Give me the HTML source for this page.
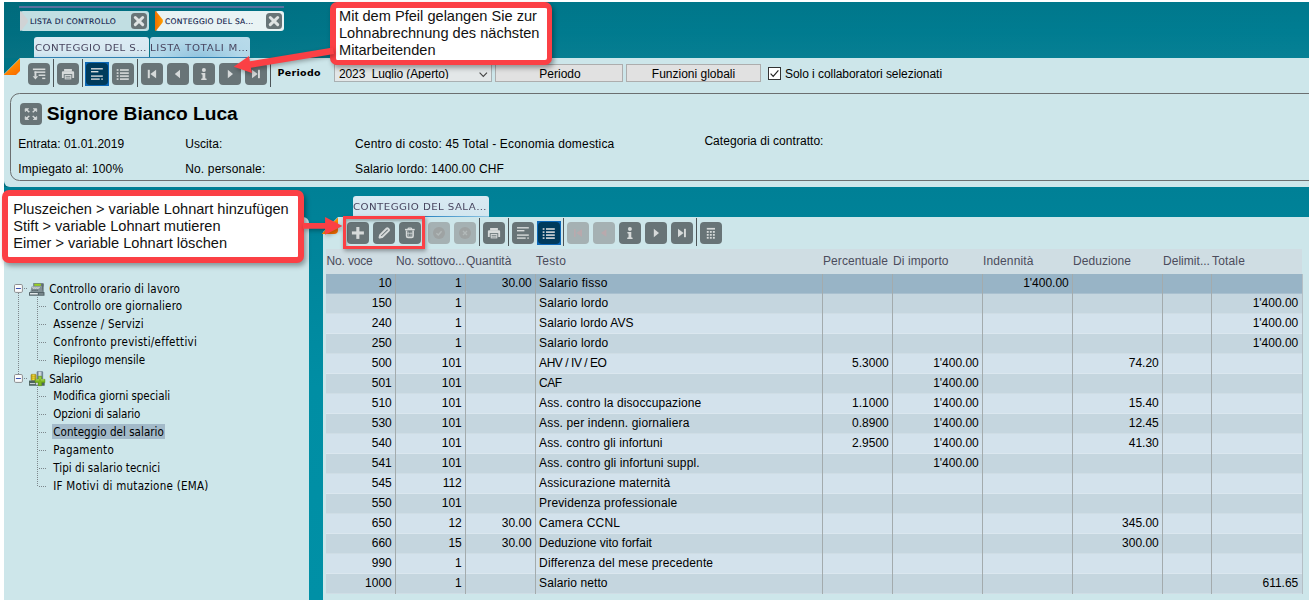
<!DOCTYPE html>
<html lang="it"><head><meta charset="utf-8"><title>Conteggio del salario</title>
<style>
html,body{margin:0;padding:0;background:#fff;}
body{width:1309px;height:600px;overflow:hidden;position:relative;font-family:"Liberation Sans",sans-serif;font-size:12px;color:#000;}
#app{position:absolute;left:0;top:0;width:1309px;height:600px;overflow:hidden;}
#app div,#app span{position:absolute;box-sizing:border-box;white-space:nowrap;}
.tb{width:22px;height:22px;background:#687477;border-radius:4px;}
.tb svg{display:block}
.tb.sel{background:#003b5c;}
.selbox{width:24px;height:24px;background:#0b67b6;}
.tb.dis{background:#a5b1b3;}
.sep{width:1px;background:#4d5558;}
.t12{font-size:12px;line-height:14px;}
.win{font-family:"Liberation Sans",sans-serif;font-size:12px;line-height:14px;}
.tree{font-family:"DejaVu Sans Condensed","DejaVu Sans",sans-serif;font-size:11.5px;line-height:14px;color:#000;}
.ann{background:#fff;border:6.1px solid #fb4045;border-radius:7px;box-shadow:2px 3px 5px rgba(0,0,0,.35);font-size:14.6px;line-height:17px;color:#111;}
.cell{font-size:12px;line-height:14px;}
.r{text-align:right;}
</style></head><body><div id="app">
<div style="left:4px;top:2px;width:1305px;height:598px;background:linear-gradient(180deg,rgba(0,0,0,.035) 0px,rgba(0,0,0,0) 30px,rgba(255,255,255,.03) 58px,rgba(255,255,255,0) 60px),linear-gradient(90deg,#006e80 0%,#007a8e 40%,#007d92 100%);"></div>
<div style="left:4px;top:187px;width:1305px;height:413px;background:linear-gradient(180deg,#008096 0px,#008298 30px,#008ea4 200px,#0090a6 100%);"></div>
<div style="left:19px;top:6px;width:265px;height:2px;background:#58709f;"></div>
<div style="left:20px;top:11px;width:129px;height:20px;background:#c1dee2;border-radius:3px;"></div>
<svg style="position:absolute;left:20px;top:11px" width="9" height="20"><path d="M0 0.3 L1 0.3 L7.4 8.2 Q8.6 10 7.4 11.8 L1 19.7 L0 19.7 Z" fill="#d0d3d5"/></svg>
<div id="tab1t" style="left:30px;top:16.2px;font-family:'DejaVu Sans',sans-serif;font-size:7.6px;line-height:12px;letter-spacing:0.307px;color:#0c1648;-webkit-text-stroke:0.1px #0c1648;">LISTA DI CONTROLLO</div>
<div style="left:155px;top:11px;width:129px;height:20px;background:#e9f3f4;border-radius:3px;"></div>
<svg style="position:absolute;left:155px;top:11px" width="9" height="20"><defs><linearGradient id="og" x1="0" x2="1"><stop offset="0" stop-color="#f06e00"/><stop offset="1" stop-color="#ffa000"/></linearGradient></defs><path d="M0 0.3 L1 0.3 L7.4 8.2 Q8.6 10 7.4 11.8 L1 19.7 L0 19.7 Z" fill="url(#og)"/></svg>
<div id="tab2t" style="left:165px;top:16.2px;font-family:'DejaVu Sans',sans-serif;font-size:7.6px;line-height:12px;letter-spacing:0.271px;color:#0c1648;-webkit-text-stroke:0.1px #0c1648;">CONTEGGIO DEL SA...</div>
<div style="left:131px;top:13px;width:16px;height:16px"><svg width="16" height="16" viewBox="0 0 16 16"><rect width="16" height="16" rx="3.5" fill="#687477"/><path d="M4.3 4.5 L11.7 11.7 M11.7 4.5 L4.3 11.7" stroke="#dfe3e3" stroke-width="3" stroke-linecap="round"/></svg></div>
<div style="left:266px;top:13px;width:16px;height:16px"><svg width="16" height="16" viewBox="0 0 16 16"><rect width="16" height="16" rx="3.5" fill="#687477"/><path d="M4.3 4.5 L11.7 11.7 M11.7 4.5 L4.3 11.7" stroke="#dfe3e3" stroke-width="3" stroke-linecap="round"/></svg></div>
<div style="left:33.5px;top:36.5px;width:115px;height:22px;background:linear-gradient(180deg,#dcebf4 0%,#d6e8f1 70%,#c2dcea 100%);border-radius:3px 3px 0 0;"></div>
<div style="left:149.5px;top:36.5px;width:100.5px;height:22px;background:radial-gradient(ellipse at 50% 100%,#8fc2dd 0%,#b3d8e9 60%,#b9dbea 100%);border-radius:3px 3px 0 0;"></div>
<div style="left:33.5px;top:57px;width:216.5px;height:1px;background:#2f7fb0;"></div>
<div id="sub1t" style="left:35px;top:42.2px;font-family:'DejaVu Sans',sans-serif;font-size:9.3px;line-height:12px;transform:scaleX(1.1);transform-origin:0 0;letter-spacing:0.345px;color:#4a4660;">CONTEGGIO DEL S…</div>
<div id="sub2t" style="left:150px;top:42.2px;font-family:'DejaVu Sans',sans-serif;font-size:9.3px;line-height:12px;transform:scaleX(1.1);transform-origin:0 0;letter-spacing:0.614px;color:#4a4660;">LISTA TOTALI M…</div>
<div style="left:4px;top:58px;width:1305px;height:129px;background:#cde6ea;border-radius:0 0 0 6px;"></div>
<svg style="position:absolute;left:4px;top:58px" width="17" height="18"><defs><linearGradient id="oc" x1="0.2" y1="0" x2="0.8" y2="1"><stop offset="0" stop-color="#ffa400"/><stop offset="1" stop-color="#fb6c00"/></linearGradient></defs><path d="M0 0 H16 L0 16 Z" fill="#007384"/><path d="M16 0.5 V13 L12 17 H0 V16.5 Z" fill="url(#oc)"/></svg>
<div class="tb " style="left:28px;top:63px"><svg width="22" height="22" viewBox="0 0 22 22"><g fill="#d6dada"><rect x="4.9" y="5.5" width="12.4" height="1.6"/><rect x="6.5" y="8.4" width="10.8" height="1.5"/><rect x="6.5" y="8.4" width="1.9" height="5.2"/><path d="M4.7 13.2 H10.2 L7.45 16.5 Z"/><rect x="10.6" y="11.5" width="6.7" height="1.5"/><rect x="14.2" y="14.6" width="3.1" height="1.5"/></g></svg></div>
<div class="sep" style="left:53px;top:59px;height:28px"></div>
<div class="tb " style="left:57px;top:63px"><svg width="22" height="22" viewBox="0 0 22 22"><g fill="#d6dada"><rect x="7.1" y="6" width="7.8" height="2.6"/><path d="M6 8.2 h10 a1.1 1.1 0 0 1 1.1 1.1 v5.6 h-12.2 v-5.6 a1.1 1.1 0 0 1 1.1 -1.1z"/><rect x="7.2" y="11.6" width="7.6" height="5.3" stroke="#687477" stroke-width="0.9"/><rect x="8.6" y="13.2" width="4.8" height="0.7" fill="#687477"/><rect x="8.6" y="14.7" width="4.8" height="0.7" fill="#687477"/></g></svg></div>
<div class="sep" style="left:82px;top:59px;height:28px"></div>
<div class="selbox" style="left:85px;top:62px"></div><div class="tb sel" style="left:86px;top:63px"><svg width="22" height="22" viewBox="0 0 22 22"><g fill="#d6dada"><rect x="5" y="5.1" width="11.8" height="1.4"/><rect x="5" y="8" width="7.4" height="1.4"/><rect x="5" y="12.4" width="11.8" height="1.4"/><rect x="5" y="15.4" width="8.7" height="1.4"/><rect x="15.3" y="15.4" width="1.5" height="1.4"/></g></svg></div>
<div class="tb " style="left:112px;top:63px"><svg width="22" height="22" viewBox="0 0 22 22"><g fill="#d6dada"><rect x="4.7" y="6.2" width="1.8" height="1.6"/><rect x="8" y="6.2" width="8.8" height="1.6"/><rect x="4.7" y="9.3" width="1.8" height="1.6"/><rect x="8" y="9.3" width="8.8" height="1.6"/><rect x="4.7" y="12.3" width="1.8" height="1.6"/><rect x="8" y="12.3" width="8.8" height="1.6"/><rect x="4.7" y="15.3" width="1.8" height="1.6"/><rect x="8" y="15.3" width="8.8" height="1.6"/></g></svg></div>
<div class="sep" style="left:137px;top:59px;height:28px"></div>
<div class="tb " style="left:141px;top:63px"><svg width="22" height="22" viewBox="0 0 22 22"><g fill="#d6dada"><rect x="6.8" y="6.8" width="2" height="8.4"/><path d="M15.1 6.8 L15.1 15.2 L9.4 11 Z"/></g></svg></div>
<div class="tb " style="left:167px;top:63px"><svg width="22" height="22" viewBox="0 0 22 22"><g fill="#d6dada"><path d="M13 6.8 L13 15.2 L7.8 11 Z"/></g></svg></div>
<div class="tb " style="left:193px;top:63px"><svg width="22" height="22" viewBox="0 0 22 22"><g fill="#d6dada"><circle cx="10.9" cy="7" r="2"/><path d="M8.4 10 h3.9 v5.2 l1.3 0.5 v1.3 h-5.4 v-1.3 l1.3 -0.5 v-3.5 l-1.1 -0.4z"/></g></svg></div>
<div class="tb " style="left:219px;top:63px"><svg width="22" height="22" viewBox="0 0 22 22"><g fill="#d6dada"><path d="M8.8 6.8 L8.8 15.2 L14 11 Z"/></g></svg></div>
<div class="tb " style="left:245px;top:63px"><svg width="22" height="22" viewBox="0 0 22 22"><g fill="#d6dada"><rect x="13" y="6.8" width="1.9" height="8.4"/><path d="M7 6.8 L7 15.2 L12.6 11 Z"/></g></svg></div>
<div class="sep" style="left:270px;top:59px;height:28px"></div>
<div id="perlab" style="left:277.5px;top:67.3px;font-family:'DejaVu Sans',sans-serif;font-weight:bold;font-size:9.5px;line-height:12px;letter-spacing:0.313px;color:#000;">Periodo</div>
<div style="left:334px;top:64px;width:158px;height:18px;background:#e3e7e8;border:1px solid #a9b0b2;"></div>
<div id="selt" class="win" style="left:339px;top:67.2px;height:11.6px;overflow:hidden;letter-spacing:-0.113px;">2023&nbsp; Luglio (Aperto)</div>
<svg style="position:absolute;left:479px;top:72px" width="9" height="6"><path d="M0.6 0.7 L4.3 4.5 L8 0.7" fill="none" stroke="#444" stroke-width="1.1"/></svg>
<div style="left:495px;top:64px;width:128px;height:18px;background:#e1e1e1;border:1px solid #adadad;"></div>
<div id="b1t" class="win" style="left:496px;top:67.3px;width:128px;text-align:center;">Periodo</div>
<div style="left:626px;top:64px;width:135px;height:18px;background:#e1e1e1;border:1px solid #adadad;"></div>
<div id="b2t" class="win" style="left:626px;top:67.3px;width:135px;text-align:center;">Funzioni globali</div>
<div style="left:768px;top:67px;width:13px;height:13px;background:#fff;border:1px solid #333;"></div>
<svg style="position:absolute;left:768px;top:67px" width="13" height="13"><path d="M2.6 6.6 L5.2 9.3 L10.4 3.4" fill="none" stroke="#222" stroke-width="1.2"/></svg>
<div id="cbt" class="win" style="left:785px;top:67.3px;letter-spacing:-0.055px;">Solo i collaboratori selezionati</div>
<div style="left:10px;top:93px;width:1320px;height:88px;border:1.5px solid #6b6f70;border-radius:9.5px;"></div>
<div class="tb" style="left:20px;top:103px"><svg width="22" height="22" viewBox="0 0 22 22"><g fill="#d6dada" stroke="#d6dada" stroke-width="1.5"><path d="M5.2 5.7 H8.6 L5.2 8.6 Z" stroke-width="0.8"/><path d="M6.6 7 L9.3 9.2"/><path d="M16.7 5.7 H13.3 L16.7 8.6 Z" stroke-width="0.8"/><path d="M15.3 7 L12.7 9.2"/><path d="M5.2 16.5 H8.6 L5.2 13.6 Z" stroke-width="0.8"/><path d="M6.6 15.2 L9.3 13"/><path d="M16.7 16.5 H13.3 L16.7 13.6 Z" stroke-width="0.8"/><path d="M15.3 15.2 L12.7 13"/></g></svg></div>
<div id="title" style="left:46.8px;top:102px;font-weight:bold;font-size:19.2px;line-height:24px;letter-spacing:0.008px;">Signore Bianco Luca</div>
<div class="t12" id="h1" style="left:18.3px;top:137px;letter-spacing:0.026px;">Entrata: 01.01.2019</div>
<div class="t12" id="h2" style="left:185.2px;top:137px;letter-spacing:0.088px;">Uscita:</div>
<div class="t12" id="h3" style="left:355px;top:137px;letter-spacing:0.179px;">Centro di costo: 45 Total - Economia domestica</div>
<div class="t12" id="h4" style="left:704.4px;top:133.8px;letter-spacing:0.045px;">Categoria di contratto:</div>
<div class="t12" id="h5" style="left:18.3px;top:161.6px;letter-spacing:0.119px;">Impiegato al: 100%</div>
<div class="t12" id="h6" style="left:185.2px;top:161.6px;letter-spacing:0.152px;">No. personale:</div>
<div class="t12" id="h7" style="left:355px;top:161.6px;letter-spacing:0.138px;">Salario lordo: 1400.00 CHF</div>
<div style="left:4px;top:217px;width:305px;height:383px;background:#cde6ea;border-radius:0 6px 0 0;"></div>
<div style="left:322.5px;top:217px;width:987px;height:383px;background:#cde6ea;"></div>
<div style="left:353px;top:196px;width:136px;height:21px;background:linear-gradient(180deg,#d9eaf3,#d2e6ef);border-radius:3px 3px 0 0;"></div>
<div id="rtabt" style="left:353px;top:200.9px;font-family:'DejaVu Sans',sans-serif;font-size:9.3px;line-height:12px;transform:scaleX(1.1);transform-origin:0 0;letter-spacing:0.380px;color:#4a4660;">CONTEGGIO DEL SALA…</div>
<div style="left:353px;top:215.8px;width:136px;height:1.4px;background:linear-gradient(90deg,#0a5ea6 0%,#2f86c2 55%,#8fc6e4 100%);"></div>
<svg style="position:absolute;left:322px;top:217px" width="17" height="18"><path d="M0 0 H16 L0 16 Z" fill="#00849a"/><path d="M16 0.5 V13 Q16 17 12 17 H0 V16.5 Z" fill="url(#oc)"/></svg>
<div class="tb " style="left:347px;top:222px"><svg width="22" height="22" viewBox="0 0 22 22"><g fill="#d6dada"><rect x="4.9" y="9.4" width="12" height="3.1"/><rect x="9.3" y="5" width="3.1" height="11.9"/></g></svg></div>
<div class="tb " style="left:373px;top:222px"><svg width="22" height="22" viewBox="0 0 22 22"><g fill="none" stroke="#d6dada" stroke-width="2" stroke-linejoin="round"><path d="M6.6 15.5 L7.1 13.1 L13.7 6.5 Q14.3 5.9 14.9 6.5 L15.8 7.4 Q16.4 8 15.8 8.6 L9.2 15 Z"/><path d="M6.4 15.8 L7 13.2 L9.2 15.2 Z" fill="#d6dada" stroke-width="0.8"/></g></svg></div>
<div class="tb " style="left:399px;top:222px"><svg width="22" height="22" viewBox="0 0 22 22"><g fill="none" stroke="#d6dada" stroke-width="1.6"><path d="M7.6 8.4 V14 Q7.6 15.4 9 15.4 H12.7 Q14.1 15.4 14.1 14 V8.4"/><path d="M6 7.6 H15.7" stroke-width="1.5"/><path d="M9 7 Q9 6.2 10 6.2 H11.7 Q12.7 6.2 12.7 7" stroke-width="1.2"/><path d="M9.7 9.6 V14 M12 9.6 V14 M8.2 11.4 H13.5" stroke-width="0.9" opacity="0.7"/></g></svg></div>
<div class="tb dis" style="left:428px;top:222px"><svg width="22" height="22" viewBox="0 0 22 22"><circle cx="11" cy="11" r="6" fill="#9ea3a3"/><path d="M8.4 11.2 L10.3 13 L13.6 9.2" fill="none" stroke="#b2b9b9" stroke-width="1.4"/></svg></div>
<div class="tb dis" style="left:454px;top:222px"><svg width="22" height="22" viewBox="0 0 22 22"><circle cx="11" cy="11" r="6" fill="#9ea3a3"/><path d="M9 9 L13 13 M13 9 L9 13" fill="none" stroke="#b2b9b9" stroke-width="1.4"/></svg></div>
<div class="sep" style="left:479px;top:218px;height:28px"></div>
<div class="tb " style="left:483px;top:222px"><svg width="22" height="22" viewBox="0 0 22 22"><g fill="#d6dada"><rect x="7.1" y="6" width="7.8" height="2.6"/><path d="M6 8.2 h10 a1.1 1.1 0 0 1 1.1 1.1 v5.6 h-12.2 v-5.6 a1.1 1.1 0 0 1 1.1 -1.1z"/><rect x="7.2" y="11.6" width="7.6" height="5.3" stroke="#687477" stroke-width="0.9"/><rect x="8.6" y="13.2" width="4.8" height="0.7" fill="#687477"/><rect x="8.6" y="14.7" width="4.8" height="0.7" fill="#687477"/></g></svg></div>
<div class="sep" style="left:508px;top:218px;height:28px"></div>
<div class="tb " style="left:512px;top:222px"><svg width="22" height="22" viewBox="0 0 22 22"><g fill="#d6dada"><rect x="5" y="5.1" width="11.8" height="1.4"/><rect x="5" y="8" width="7.4" height="1.4"/><rect x="5" y="12.4" width="11.8" height="1.4"/><rect x="5" y="15.4" width="8.7" height="1.4"/><rect x="15.3" y="15.4" width="1.5" height="1.4"/></g></svg></div>
<div class="selbox" style="left:537px;top:221px"></div><div class="tb sel" style="left:538px;top:222px"><svg width="22" height="22" viewBox="0 0 22 22"><g fill="#d6dada"><rect x="4.7" y="6.2" width="1.8" height="1.6"/><rect x="8" y="6.2" width="8.8" height="1.6"/><rect x="4.7" y="9.3" width="1.8" height="1.6"/><rect x="8" y="9.3" width="8.8" height="1.6"/><rect x="4.7" y="12.3" width="1.8" height="1.6"/><rect x="8" y="12.3" width="8.8" height="1.6"/><rect x="4.7" y="15.3" width="1.8" height="1.6"/><rect x="8" y="15.3" width="8.8" height="1.6"/></g></svg></div>
<div class="sep" style="left:563px;top:218px;height:28px"></div>
<div class="tb dis" style="left:567px;top:222px"><svg width="22" height="22" viewBox="0 0 22 22"><g fill="#b9a9ad"><rect x="7" y="7" width="1.6" height="8"/><path d="M15 7 L15 15 L9.4 11 Z"/></g></svg></div>
<div class="tb dis" style="left:593px;top:222px"><svg width="22" height="22" viewBox="0 0 22 22"><g fill="#b9a9ad"><path d="M13.4 7 L13.4 15 L8 11 Z"/></g></svg></div>
<div class="tb " style="left:619px;top:222px"><svg width="22" height="22" viewBox="0 0 22 22"><g fill="#d6dada"><circle cx="10.9" cy="7" r="2"/><path d="M8.4 10 h3.9 v5.2 l1.3 0.5 v1.3 h-5.4 v-1.3 l1.3 -0.5 v-3.5 l-1.1 -0.4z"/></g></svg></div>
<div class="tb " style="left:645px;top:222px"><svg width="22" height="22" viewBox="0 0 22 22"><g fill="#d6dada"><path d="M8.8 6.8 L8.8 15.2 L14 11 Z"/></g></svg></div>
<div class="tb " style="left:671px;top:222px"><svg width="22" height="22" viewBox="0 0 22 22"><g fill="#d6dada"><rect x="13" y="6.8" width="1.9" height="8.4"/><path d="M7 6.8 L7 15.2 L12.6 11 Z"/></g></svg></div>
<div class="sep" style="left:696px;top:218px;height:28px"></div>
<div class="tb " style="left:700px;top:222px"><svg width="22" height="22" viewBox="0 0 22 22"><g fill="#d6dada"><rect x="6.8" y="5.9" width="8.2" height="1.7"/><rect x="6.80" y="9.00" width="1.9" height="1.8"/><rect x="6.80" y="11.95" width="1.9" height="1.8"/><rect x="6.80" y="14.90" width="1.9" height="1.8"/><rect x="9.85" y="9.00" width="1.9" height="1.8"/><rect x="9.85" y="11.95" width="1.9" height="1.8"/><rect x="9.85" y="14.90" width="1.9" height="1.8"/><rect x="12.90" y="9.00" width="1.9" height="1.8"/><rect x="12.90" y="11.95" width="1.9" height="1.8"/><rect x="12.90" y="14.90" width="1.9" height="1.8"/></g></svg></div>
<div style="left:326px;top:249px;width:976px;height:25px;background:#cfdde3;"></div>
<div class="cell" id="hd0" style="left:326.5px;top:254px;color:#4b4c5c;letter-spacing:-0.157px;">No. voce</div>
<div class="cell" id="hd1" style="left:396.0px;top:254px;color:#4b4c5c;letter-spacing:-0.143px;">No. sottovo...</div>
<div class="cell" id="hd2" style="left:466.0px;top:254px;color:#4b4c5c;letter-spacing:-0.009px;">Quantità</div>
<div class="cell" id="hd3" style="left:536.0px;top:254px;color:#4b4c5c;letter-spacing:0.303px;">Testo</div>
<div class="cell" id="hd4" style="left:823.0px;top:254px;color:#4b4c5c;letter-spacing:0.078px;">Percentuale</div>
<div class="cell" id="hd5" style="left:893.0px;top:254px;color:#4b4c5c;letter-spacing:0.092px;">Di importo</div>
<div class="cell" id="hd6" style="left:983.0px;top:254px;color:#4b4c5c;letter-spacing:0.124px;">Indennità</div>
<div class="cell" id="hd7" style="left:1073.0px;top:254px;color:#4b4c5c;letter-spacing:0.057px;">Deduzione</div>
<div class="cell" id="hd8" style="left:1163.0px;top:254px;color:#4b4c5c;letter-spacing:0.032px;">Delimit...</div>
<div class="cell" id="hd9" style="left:1212.0px;top:254px;color:#4b4c5c;letter-spacing:0.163px;">Totale</div>
<div style="left:326px;top:274px;width:976px;height:20px;background:#98b4c6;border-bottom:1px solid #a9c0cf;"></div>
<div class="cell r" style="left:326px;top:275.7px;width:65.8px;">10</div>
<div class="cell r" style="left:395.5px;top:275.7px;width:66.3px;">1</div>
<div class="cell r" style="left:465.5px;top:275.7px;width:66.3px;">30.00</div>
<div class="cell" id="tx0" style="left:539.1px;top:275.7px;letter-spacing:0.241px;">Salario fisso</div>
<div class="cell r" style="left:982.5px;top:275.7px;width:86.3px;">1'400.00</div>
<div style="left:326px;top:294px;width:976px;height:20px;background:#c5d6df;border-bottom:1px solid #cfdde5;"></div>
<div class="cell r" style="left:326px;top:295.7px;width:65.8px;">150</div>
<div class="cell r" style="left:395.5px;top:295.7px;width:66.3px;">1</div>
<div class="cell" id="tx1" style="left:539.1px;top:295.7px;letter-spacing:0.148px;">Salario lordo</div>
<div class="cell r" style="left:1211.5px;top:295.7px;width:86.8px;">1'400.00</div>
<div style="left:326px;top:314px;width:976px;height:20px;background:#d3e2ec;border-bottom:1px solid #dbe7ef;"></div>
<div class="cell r" style="left:326px;top:315.7px;width:65.8px;">240</div>
<div class="cell r" style="left:395.5px;top:315.7px;width:66.3px;">1</div>
<div class="cell" id="tx2" style="left:539.1px;top:315.7px;letter-spacing:0.085px;">Salario lordo AVS</div>
<div class="cell r" style="left:1211.5px;top:315.7px;width:86.8px;">1'400.00</div>
<div style="left:326px;top:334px;width:976px;height:20px;background:#c5d6df;border-bottom:1px solid #cfdde5;"></div>
<div class="cell r" style="left:326px;top:335.7px;width:65.8px;">250</div>
<div class="cell r" style="left:395.5px;top:335.7px;width:66.3px;">1</div>
<div class="cell" id="tx3" style="left:539.1px;top:335.7px;letter-spacing:0.148px;">Salario lordo</div>
<div class="cell r" style="left:1211.5px;top:335.7px;width:86.8px;">1'400.00</div>
<div style="left:326px;top:354px;width:976px;height:20px;background:#d3e2ec;border-bottom:1px solid #dbe7ef;"></div>
<div class="cell r" style="left:326px;top:355.7px;width:65.8px;">500</div>
<div class="cell r" style="left:395.5px;top:355.7px;width:66.3px;">101</div>
<div class="cell" id="tx4" style="left:539.1px;top:355.7px;letter-spacing:-0.459px;">AHV / IV / EO</div>
<div class="cell r" style="left:822.5px;top:355.7px;width:66.3px;">5.3000</div>
<div class="cell r" style="left:892.5px;top:355.7px;width:86.3px;">1'400.00</div>
<div class="cell r" style="left:1072.5px;top:355.7px;width:86.3px;">74.20</div>
<div style="left:326px;top:374px;width:976px;height:20px;background:#c5d6df;border-bottom:1px solid #cfdde5;"></div>
<div class="cell r" style="left:326px;top:375.7px;width:65.8px;">501</div>
<div class="cell r" style="left:395.5px;top:375.7px;width:66.3px;">101</div>
<div class="cell" id="tx5" style="left:539.1px;top:375.7px;letter-spacing:-0.500px;">CAF</div>
<div class="cell r" style="left:892.5px;top:375.7px;width:86.3px;">1'400.00</div>
<div style="left:326px;top:394px;width:976px;height:20px;background:#d3e2ec;border-bottom:1px solid #dbe7ef;"></div>
<div class="cell r" style="left:326px;top:395.7px;width:65.8px;">510</div>
<div class="cell r" style="left:395.5px;top:395.7px;width:66.3px;">101</div>
<div class="cell" id="tx6" style="left:539.1px;top:395.7px;letter-spacing:0.119px;">Ass. contro la disoccupazione</div>
<div class="cell r" style="left:822.5px;top:395.7px;width:66.3px;">1.1000</div>
<div class="cell r" style="left:892.5px;top:395.7px;width:86.3px;">1'400.00</div>
<div class="cell r" style="left:1072.5px;top:395.7px;width:86.3px;">15.40</div>
<div style="left:326px;top:414px;width:976px;height:20px;background:#c5d6df;border-bottom:1px solid #cfdde5;"></div>
<div class="cell r" style="left:326px;top:415.7px;width:65.8px;">530</div>
<div class="cell r" style="left:395.5px;top:415.7px;width:66.3px;">101</div>
<div class="cell" id="tx7" style="left:539.1px;top:415.7px;letter-spacing:0.153px;">Ass. per indenn. giornaliera</div>
<div class="cell r" style="left:822.5px;top:415.7px;width:66.3px;">0.8900</div>
<div class="cell r" style="left:892.5px;top:415.7px;width:86.3px;">1'400.00</div>
<div class="cell r" style="left:1072.5px;top:415.7px;width:86.3px;">12.45</div>
<div style="left:326px;top:434px;width:976px;height:20px;background:#d3e2ec;border-bottom:1px solid #dbe7ef;"></div>
<div class="cell r" style="left:326px;top:435.7px;width:65.8px;">540</div>
<div class="cell r" style="left:395.5px;top:435.7px;width:66.3px;">101</div>
<div class="cell" id="tx8" style="left:539.1px;top:435.7px;letter-spacing:0.084px;">Ass. contro gli infortuni</div>
<div class="cell r" style="left:822.5px;top:435.7px;width:66.3px;">2.9500</div>
<div class="cell r" style="left:892.5px;top:435.7px;width:86.3px;">1'400.00</div>
<div class="cell r" style="left:1072.5px;top:435.7px;width:86.3px;">41.30</div>
<div style="left:326px;top:454px;width:976px;height:20px;background:#c5d6df;border-bottom:1px solid #cfdde5;"></div>
<div class="cell r" style="left:326px;top:455.7px;width:65.8px;">541</div>
<div class="cell r" style="left:395.5px;top:455.7px;width:66.3px;">101</div>
<div class="cell" id="tx9" style="left:539.1px;top:455.7px;letter-spacing:0.120px;">Ass. contro gli infortuni suppl.</div>
<div class="cell r" style="left:892.5px;top:455.7px;width:86.3px;">1'400.00</div>
<div style="left:326px;top:474px;width:976px;height:20px;background:#d3e2ec;border-bottom:1px solid #dbe7ef;"></div>
<div class="cell r" style="left:326px;top:475.7px;width:65.8px;">545</div>
<div class="cell r" style="left:395.5px;top:475.7px;width:66.3px;">112</div>
<div class="cell" id="tx10" style="left:539.1px;top:475.7px;letter-spacing:0.136px;">Assicurazione maternità</div>
<div style="left:326px;top:494px;width:976px;height:20px;background:#c5d6df;border-bottom:1px solid #cfdde5;"></div>
<div class="cell r" style="left:326px;top:495.7px;width:65.8px;">550</div>
<div class="cell r" style="left:395.5px;top:495.7px;width:66.3px;">101</div>
<div class="cell" id="tx11" style="left:539.1px;top:495.7px;letter-spacing:0.148px;">Previdenza professionale</div>
<div style="left:326px;top:514px;width:976px;height:20px;background:#d3e2ec;border-bottom:1px solid #dbe7ef;"></div>
<div class="cell r" style="left:326px;top:515.7px;width:65.8px;">650</div>
<div class="cell r" style="left:395.5px;top:515.7px;width:66.3px;">12</div>
<div class="cell r" style="left:465.5px;top:515.7px;width:66.3px;">30.00</div>
<div class="cell" id="tx12" style="left:539.1px;top:515.7px;letter-spacing:0.218px;">Camera CCNL</div>
<div class="cell r" style="left:1072.5px;top:515.7px;width:86.3px;">345.00</div>
<div style="left:326px;top:534px;width:976px;height:20px;background:#c5d6df;border-bottom:1px solid #cfdde5;"></div>
<div class="cell r" style="left:326px;top:535.7px;width:65.8px;">660</div>
<div class="cell r" style="left:395.5px;top:535.7px;width:66.3px;">15</div>
<div class="cell r" style="left:465.5px;top:535.7px;width:66.3px;">30.00</div>
<div class="cell" id="tx13" style="left:539.1px;top:535.7px;letter-spacing:0.003px;">Deduzione vito forfait</div>
<div class="cell r" style="left:1072.5px;top:535.7px;width:86.3px;">300.00</div>
<div style="left:326px;top:554px;width:976px;height:20px;background:#d3e2ec;border-bottom:1px solid #dbe7ef;"></div>
<div class="cell r" style="left:326px;top:555.7px;width:65.8px;">990</div>
<div class="cell r" style="left:395.5px;top:555.7px;width:66.3px;">1</div>
<div class="cell" id="tx14" style="left:539.1px;top:555.7px;letter-spacing:0.140px;">Differenza del mese precedente</div>
<div style="left:326px;top:574px;width:976px;height:20px;background:#c5d6df;border-bottom:1px solid #cfdde5;"></div>
<div class="cell r" style="left:326px;top:575.7px;width:65.8px;">1000</div>
<div class="cell r" style="left:395.5px;top:575.7px;width:66.3px;">1</div>
<div class="cell" id="tx15" style="left:539.1px;top:575.7px;letter-spacing:0.086px;">Salario netto</div>
<div class="cell r" style="left:1211.5px;top:575.7px;width:86.8px;">611.65</div>
<div style="left:395.0px;top:274px;width:1px;height:320px;background:#a3abad;"></div>
<div style="left:465.0px;top:274px;width:1px;height:320px;background:#a3abad;"></div>
<div style="left:535.0px;top:274px;width:1px;height:320px;background:#a3abad;"></div>
<div style="left:822.0px;top:274px;width:1px;height:320px;background:#a3abad;"></div>
<div style="left:892.0px;top:274px;width:1px;height:320px;background:#a3abad;"></div>
<div style="left:982.0px;top:274px;width:1px;height:320px;background:#a3abad;"></div>
<div style="left:1072.0px;top:274px;width:1px;height:320px;background:#a3abad;"></div>
<div style="left:1162.0px;top:274px;width:1px;height:320px;background:#a3abad;"></div>
<div style="left:1211.0px;top:274px;width:1px;height:320px;background:#a3abad;"></div>
<div style="left:1301.5px;top:274px;width:1px;height:320px;background:#b4bfc5;"></div>
<div style="left:18px;top:293px;width:1px;height:81px;background:repeating-linear-gradient(180deg,#7d878c 0 1px,transparent 1px 2px);"></div>
<div style="left:37px;top:297px;width:1px;height:64px;background:repeating-linear-gradient(180deg,#7d878c 0 1px,transparent 1px 2px);"></div>
<div style="left:37px;top:387px;width:1px;height:100px;background:repeating-linear-gradient(180deg,#7d878c 0 1px,transparent 1px 2px);"></div>
<svg style="position:absolute;left:14px;top:284px" width="9" height="9"><rect x="0.5" y="0.5" width="7.9" height="7.9" rx="1.2" fill="#fafbfb" stroke="#8c8f92"/><rect x="1.9" y="4" width="5" height="1" fill="#3b55b4"/></svg>
<div style="left:24px;top:288px;width:4px;height:1px;background:repeating-linear-gradient(90deg,#7d878c 0 1px,transparent 1px 2px);"></div>
<div class="tree" id="tr0" style="left:49.2px;top:282.0px;letter-spacing:0.095px;">Controllo orario di lavoro</div>
<div style="left:39px;top:306px;width:8px;height:1px;background:repeating-linear-gradient(90deg,#7d878c 0 1px,transparent 1px 2px);"></div>
<div class="tree" id="tr1" style="left:53.3px;top:298.5px;letter-spacing:0.159px;">Controllo ore giornaliero</div>
<div style="left:39px;top:324px;width:8px;height:1px;background:repeating-linear-gradient(90deg,#7d878c 0 1px,transparent 1px 2px);"></div>
<div class="tree" id="tr2" style="left:53.3px;top:316.5px;letter-spacing:0.198px;">Assenze / Servizi</div>
<div style="left:39px;top:342px;width:8px;height:1px;background:repeating-linear-gradient(90deg,#7d878c 0 1px,transparent 1px 2px);"></div>
<div class="tree" id="tr3" style="left:53.3px;top:334.5px;letter-spacing:0.277px;">Confronto previsti/effettivi</div>
<div style="left:39px;top:360px;width:8px;height:1px;background:repeating-linear-gradient(90deg,#7d878c 0 1px,transparent 1px 2px);"></div>
<div class="tree" id="tr4" style="left:53.3px;top:352.5px;letter-spacing:0.001px;">Riepilogo mensile</div>
<svg style="position:absolute;left:14px;top:374px" width="9" height="9"><rect x="0.5" y="0.5" width="7.9" height="7.9" rx="1.2" fill="#fafbfb" stroke="#8c8f92"/><rect x="1.9" y="4" width="5" height="1" fill="#3b55b4"/></svg>
<div style="left:24px;top:378px;width:4px;height:1px;background:repeating-linear-gradient(90deg,#7d878c 0 1px,transparent 1px 2px);"></div>
<div class="tree" id="tr5" style="left:49.2px;top:372.0px;letter-spacing:-0.369px;">Salario</div>
<div style="left:39px;top:396px;width:8px;height:1px;background:repeating-linear-gradient(90deg,#7d878c 0 1px,transparent 1px 2px);"></div>
<div class="tree" id="tr6" style="left:53.3px;top:388.5px;letter-spacing:-0.053px;">Modifica giorni speciali</div>
<div style="left:39px;top:414px;width:8px;height:1px;background:repeating-linear-gradient(90deg,#7d878c 0 1px,transparent 1px 2px);"></div>
<div class="tree" id="tr7" style="left:53.3px;top:406.5px;letter-spacing:-0.122px;">Opzioni di salario</div>
<div style="left:39px;top:432px;width:8px;height:1px;background:repeating-linear-gradient(90deg,#7d878c 0 1px,transparent 1px 2px);"></div>
<div style="left:52px;top:424.2px;width:113.3px;height:14.7px;background:#a3bac9;"></div>
<div class="tree" id="tr8" style="left:53.3px;top:424.5px;letter-spacing:0.044px;">Conteggio del salario</div>
<div style="left:39px;top:450px;width:8px;height:1px;background:repeating-linear-gradient(90deg,#7d878c 0 1px,transparent 1px 2px);"></div>
<div class="tree" id="tr9" style="left:53.3px;top:442.5px;letter-spacing:0.259px;">Pagamento</div>
<div style="left:39px;top:468px;width:8px;height:1px;background:repeating-linear-gradient(90deg,#7d878c 0 1px,transparent 1px 2px);"></div>
<div class="tree" id="tr10" style="left:53.3px;top:460.5px;letter-spacing:0.035px;">Tipi di salario tecnici</div>
<div style="left:39px;top:486px;width:8px;height:1px;background:repeating-linear-gradient(90deg,#7d878c 0 1px,transparent 1px 2px);"></div>
<div class="tree" id="tr11" style="left:53.3px;top:478.5px;letter-spacing:0.261px;">IF Motivi di mutazione (EMA)</div>
<svg style="position:absolute;left:29px;top:282px" width="17" height="15" viewBox="0 0 17 15"><rect x="4.2" y="1.1" width="10.4" height="3.4" fill="#6c7b80"/><rect x="5.3" y="1.8" width="6.6" height="2" fill="#98d020"/><rect x="12.6" y="2" width="2" height="8.2" fill="#5f6e73"/><path d="M2.6 4.5 L12.6 4.5 L13.8 10.2 L1.3 10.2 Z" fill="#819095"/><g fill="#f1f4f4"><rect x="3.4" y="5.1" width="1.1" height="1.1"/><rect x="5.4" y="5.1" width="1.1" height="1.1"/><rect x="7.4" y="5.1" width="1.1" height="1.1"/><rect x="9.4" y="5.1" width="1.1" height="1.1"/><rect x="4.4" y="6.1" width="1" height="0.9"/><rect x="6.4" y="6.1" width="1" height="0.9"/><rect x="8.4" y="6.1" width="1" height="0.9"/></g><g fill="#4d5a5e"><rect x="3.3" y="7.8" width="1.2" height="1.1"/><rect x="5.4" y="7.8" width="1.2" height="1.1"/><rect x="7.5" y="7.8" width="1.2" height="1.1"/></g><rect x="0" y="10" width="15.5" height="3.8" rx="0.6" fill="#55656a"/><rect x="1" y="11" width="7.8" height="1.5" fill="#e2e8e9"/><rect x="10" y="11" width="4.4" height="1.9" fill="#76868b"/></svg>
<svg style="position:absolute;left:29px;top:371px" width="17" height="16" viewBox="0 0 17 16"><defs><linearGradient id="gd" x1="0" x2="1"><stop offset="0" stop-color="#b89a18"/><stop offset="0.45" stop-color="#f4e23a"/><stop offset="1" stop-color="#b89a18"/></linearGradient><linearGradient id="sv" x1="0" x2="1"><stop offset="0" stop-color="#5f7488"/><stop offset="0.5" stop-color="#e6edf2"/><stop offset="1" stop-color="#5f7488"/></linearGradient></defs><rect x="8" y="0.4" width="5.7" height="9" rx="0.8" fill="url(#sv)" stroke="#51657a" stroke-width="0.5"/><rect x="2" y="3.3" width="5.1" height="6.2" rx="0.8" fill="url(#gd)" stroke="#8e7712" stroke-width="0.5"/><path d="M2.2 5.3 H7 M2.2 7.2 H7" stroke="#a88c14" stroke-width="0.5"/><rect x="0" y="9.4" width="15.7" height="5.3" rx="0.5" fill="#4e6460"/><rect x="0.9" y="12" width="5.4" height="1.1" fill="#c9d4d2"/><rect x="7" y="11.2" width="2" height="2.6" fill="#d8d2e6"/><path d="M9.3 5.2 h3.4 v3.1 h3.2 v3.3 h-3.2 v3.1 h-3.4 v-3.1 h-3.2 v-3.3 h3.2 z" fill="#7db61c" stroke="#5c9410" stroke-width="0.5"/><path d="M10 8.9 h-3.2 M11 6 v2.4 M12 8.9 h3.2" stroke="#c6e88a" stroke-width="0.7" fill="none"/></svg>
<div class="ann" style="left:330px;top:2px;width:222px;height:62.6px;border-width:6px 5.7px 5.3px 6px;"></div>
<div id="a1" style="left:339px;top:7.5px;font-size:14.6px;line-height:17px;color:#111;white-space:pre;">Mit dem Pfeil gelangen Sie zur
Lohnabrechnung des nächsten
Mitarbeitenden</div>
<svg style="position:absolute;left:225px;top:30px;filter:drop-shadow(1px 2px 2px rgba(0,0,0,.3))" width="115" height="50" viewBox="225 30 115 50"><path d="M233.7 66.7 L249 56 L249.9 61.2 L333 47.5 L334 54 L250.8 67.8 L252 72.9 Z" fill="#fb4045"/></svg>
<div class="ann" style="left:2px;top:190px;width:302px;height:72.5px;"></div>
<div id="a2" style="left:13.3px;top:200.5px;font-size:14.6px;line-height:17px;color:#111;white-space:pre;">Pluszeichen &gt; variable Lohnart hinzufügen
Stift &gt; variable Lohnart mutieren
Eimer &gt; variable Lohnart löschen</div>
<svg style="position:absolute;left:300px;top:210px;filter:drop-shadow(1px 2px 2px rgba(0,0,0,.3))" width="50" height="32" viewBox="300 210 50 32"><path d="M303 223.1 H325.1 V217.1 L342.4 225.9 L325.1 234.8 V228.8 H303 Z" fill="#fb4045"/></svg>
<div style="left:343.2px;top:216.2px;width:81.8px;height:32.6px;border:3px solid #fb4045;box-shadow:1px 2px 4px rgba(0,0,0,.35), inset 1px 2px 3px rgba(0,0,0,.28);"></div>
</div></body></html>
